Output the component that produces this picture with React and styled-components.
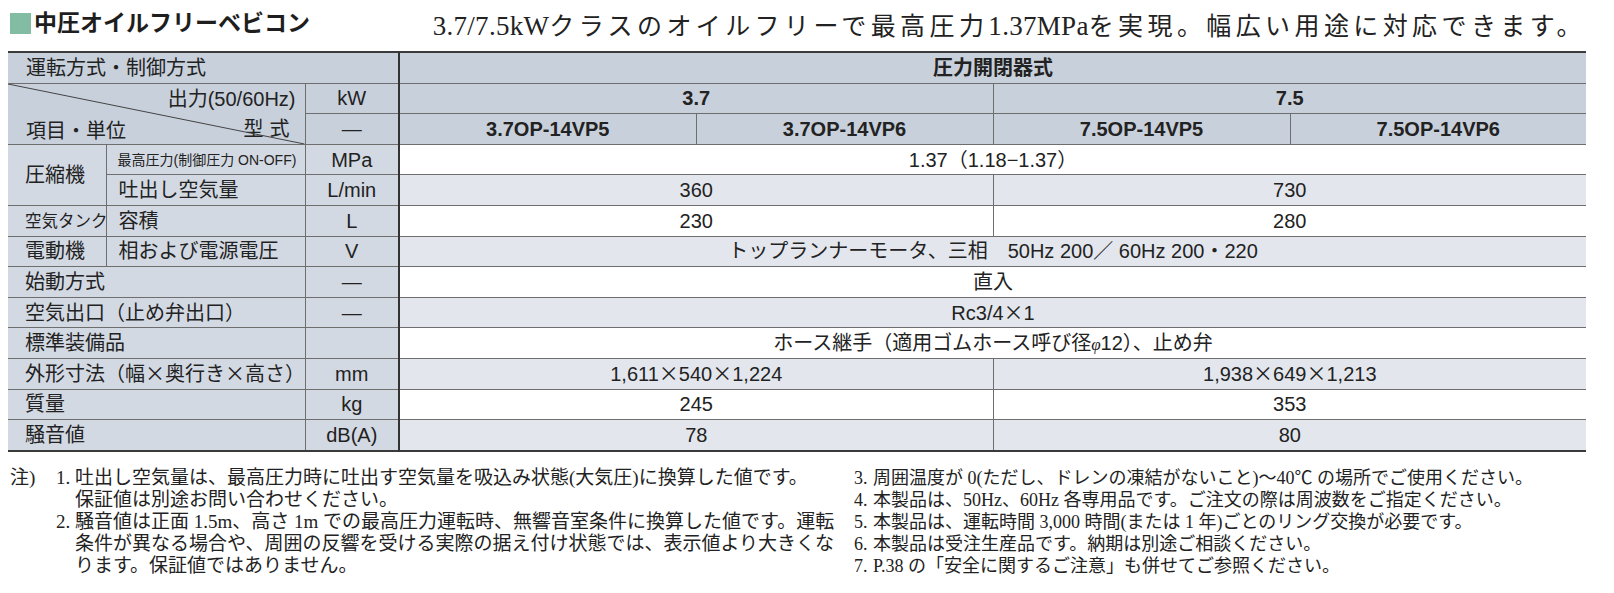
import React from "react";
import styled, { createGlobalStyle } from "styled-components";

const GlobalStyle = createGlobalStyle`
  html, body {
    margin: 0;
    padding: 0;
    background: #fff;
  }
  body {
    font-family: "Liberation Sans", "Noto Sans CJK JP", sans-serif;
    color: #222;
  }
`;

const tone = {
  head: "#c8d0db",
  label: "#d3d9e2",
  white: "#ffffff",
  gray: "#e3e7ed",
};

const Page = styled.div`
  width: 1614px;
  box-sizing: border-box;
  padding: 8px 28px 0 8px;
`;

const TopBar = styled.div`
  height: 43px;
  display: flex;
  align-items: flex-start;
  justify-content: space-between;
`;

const Title = styled.h1`
  margin: 4px 0 0 2px;
  display: flex;
  align-items: center;
  gap: 3px;
  font-size: 23px;
  font-weight: 700;
  line-height: 1;
  color: #1e1e1e;
`;

const Mark = styled.span`
  width: 21px;
  height: 21px;
  background: #82bca3;
`;

const Lead = styled.p`
  margin: 2px 0 0;
  font-family: "Liberation Serif", "Noto Sans CJK JP", serif;
  font-size: 25px;
  letter-spacing: 4.4px;
  line-height: 1.2;
  color: #222;
`;

const Latin = styled.span`
  font-size: 27px;
  letter-spacing: 0.3px;
`;

const Spec = styled.table`
  width: 1578px;
  table-layout: fixed;
  border-collapse: collapse;
  border-top: 2px solid #3a3a3a;
  border-bottom: 2px solid #3a3a3a;
`;

const Cell = styled.td`
  height: 29.6px;
  padding: 0 0 0 ${(p) => p.$pad || 0}px;
  background: ${(p) => tone[p.$tone || "white"]};
  text-align: ${(p) => (p.$pad ? "left" : "center")};
  font-weight: ${(p) => (p.$bold ? 700 : 400)};
  font-size: ${(p) => p.$size || 20}px;
  letter-spacing: ${(p) => p.$track || 0}px;
  border-bottom: 1px solid #6e6e6e;
  border-left: ${(p) =>
    p.$edge === "thick"
      ? "2px solid #333"
      : p.$edge === "thin"
      ? "1px solid #6e6e6e"
      : "none"};
  white-space: nowrap;
  line-height: 1;
  vertical-align: middle;
`;

const DiagCell = styled.td`
  padding: 0;
  background: ${tone.head};
  border-bottom: 1px solid #6e6e6e;
  vertical-align: top;
`;

const DiagBox = styled.div`
  position: relative;
  height: 60px;
  display: grid;
  grid-template-columns: 1fr auto;
  grid-template-rows: 30px 30px;
  align-items: center;
  font-size: 20px;
  line-height: 1;
`;

const DiagText = styled.span`
  justify-self: ${(p) => (p.$end ? "end" : "start")};
  padding: ${(p) => (p.$end ? "0 9px 0 0" : "4px 0 0 18px")};
  letter-spacing: ${(p) => p.$track || 0}px;
  white-space: nowrap;
`;

const DiagLine = styled.svg`
  position: absolute;
  inset: 0;
  width: 100%;
  height: 100%;
  pointer-events: none;
`;

const Times = styled.span`
  font-family: "Noto Sans CJK JP", sans-serif;
`;

const Phi = styled.i`
  font-family: "Liberation Serif", serif;
  font-size: 17px;
`;

const Notes = styled.div`
  display: flex;
  margin-top: 15px;
  font-family: "Liberation Serif", "Noto Sans CJK JP", serif;
  line-height: 22px;
  color: #222;
`;

const NoteHead = styled.div`
  width: 48px;
  flex: none;
  padding-left: 2px;
  box-sizing: border-box;
  font-size: 19px;
`;

const NoteList = styled.div`
  width: ${(p) => p.$w}px;
  flex: none;
  font-size: ${(p) => p.$size}px;
`;

const Note = styled.div`
  display: flex;
  white-space: nowrap;
`;

const NoteNum = styled.span`
  width: 19px;
  flex: none;
`;

const x = <Times>×</Times>;

const labelRows = [
  { key: "start", text: "始動方式", unit: "—", tone: "white", value: "直入" },
  { key: "out", text: "空気出口（止め弁出口）", unit: "—", tone: "gray", value: <>Rc3/4{x}1</> },
  {
    key: "std",
    text: "標準装備品",
    unit: "",
    tone: "white",
    value: (
      <>
        ホース継手（適用ゴムホース呼び径<Phi>φ</Phi>12）、止め弁
      </>
    ),
  },
];

const pairRows = [
  {
    key: "size",
    text: <>外形寸法（幅{x}奥行き{x}高さ）</>,
    unit: "mm",
    tone: "gray",
    a: <>1,611{x}540{x}1,224</>,
    b: <>1,938{x}649{x}1,213</>,
  },
  { key: "mass", text: "質量", unit: "kg", tone: "white", a: "245", b: "353" },
  { key: "noise", text: "騒音値", unit: "dB(A)", tone: "gray", a: "78", b: "80" },
];

const models = ["3.7OP-14VP5", "3.7OP-14VP6", "7.5OP-14VP5", "7.5OP-14VP6"];

export default function App() {
  return (
    <Page>
      <GlobalStyle />
      <TopBar>
        <Title>
          <Mark />
          中圧オイルフリーベビコン
        </Title>
        <Lead>
          <Latin>3.7/7.5kW</Latin>クラスのオイルフリーで最高圧力<Latin>1.37MPa</Latin>
          を実現。幅広い用途に対応できます。
        </Lead>
      </TopBar>

      <Spec>
        <colgroup>
          <col style={{ width: 98 }} />
          <col style={{ width: 199 }} />
          <col style={{ width: 94 }} />
          <col style={{ width: 297 }} />
          <col style={{ width: 297 }} />
          <col style={{ width: 297 }} />
          <col style={{ width: 296 }} />
        </colgroup>
        <tbody>
          <tr>
            <Cell colSpan={3} $tone="head" $pad={18}>
              運転方式・制御方式
            </Cell>
            <Cell colSpan={4} $tone="head" $edge="thick" $bold>
              圧力開閉器式
            </Cell>
          </tr>
          <tr>
            <DiagCell colSpan={2} rowSpan={2}>
              <DiagBox>
                <DiagLine viewBox="0 0 100 100" preserveAspectRatio="none">
                  <line x1="0" y1="0" x2="100" y2="100" stroke="#444" strokeWidth="1" vectorEffect="non-scaling-stroke" />
                </DiagLine>
                <span />
                <DiagText $end>出力(50/60Hz)</DiagText>
                <DiagText>項目・単位</DiagText>
                <DiagText $end $track={6}>型式</DiagText>
              </DiagBox>
            </DiagCell>
            <Cell $tone="head" $edge="thin">kW</Cell>
            <Cell colSpan={2} $tone="head" $edge="thick" $bold>3.7</Cell>
            <Cell colSpan={2} $tone="head" $edge="thin" $bold>7.5</Cell>
          </tr>
          <tr>
            <Cell $tone="head" $edge="thin">—</Cell>
            {models.map((m, i) => (
              <Cell key={m} $tone="head" $edge={i === 0 ? "thick" : "thin"} $bold>
                {m}
              </Cell>
            ))}
          </tr>

          <tr>
            <Cell rowSpan={2} $tone="label" $pad={17}>圧縮機</Cell>
            <Cell $tone="label" $edge="thin" $pad={11} $size={14}>
              最高圧力(制御圧力 ON-OFF)
            </Cell>
            <Cell $tone="label" $edge="thin">MPa</Cell>
            <Cell colSpan={4} $edge="thick">1.37（1.18−1.37）</Cell>
          </tr>
          <tr>
            <Cell $tone="label" $edge="thin" $pad={12}>吐出し空気量</Cell>
            <Cell $tone="label" $edge="thin">L/min</Cell>
            <Cell colSpan={2} $tone="gray" $edge="thick">360</Cell>
            <Cell colSpan={2} $tone="gray" $edge="thin">730</Cell>
          </tr>
          <tr>
            <Cell $tone="label" $pad={17} $size={16.5}>空気タンク</Cell>
            <Cell $tone="label" $edge="thin" $pad={12}>容積</Cell>
            <Cell $tone="label" $edge="thin">L</Cell>
            <Cell colSpan={2} $edge="thick">230</Cell>
            <Cell colSpan={2} $edge="thin">280</Cell>
          </tr>
          <tr>
            <Cell $tone="label" $pad={17}>電動機</Cell>
            <Cell $tone="label" $edge="thin" $pad={12}>相および電源電圧</Cell>
            <Cell $tone="label" $edge="thin">V</Cell>
            <Cell colSpan={4} $tone="gray" $edge="thick">
              トップランナーモータ、三相　50Hz 200／ 60Hz 200・220
            </Cell>
          </tr>
          {labelRows.map((r) => (
            <tr key={r.key}>
              <Cell colSpan={2} $tone="label" $pad={17}>{r.text}</Cell>
              <Cell $tone="label" $edge="thin">{r.unit}</Cell>
              <Cell colSpan={4} $tone={r.tone} $edge="thick">{r.value}</Cell>
            </tr>
          ))}
          {pairRows.map((r) => (
            <tr key={r.key}>
              <Cell colSpan={2} $tone="label" $pad={17}>{r.text}</Cell>
              <Cell $tone="label" $edge="thin">{r.unit}</Cell>
              <Cell colSpan={2} $tone={r.tone} $edge="thick">{r.a}</Cell>
              <Cell colSpan={2} $tone={r.tone} $edge="thin">{r.b}</Cell>
            </tr>
          ))}
        </tbody>
      </Spec>

      <Notes>
        <NoteHead>注)</NoteHead>
        <NoteList $w={798} $size={19}>
          <Note>
            <NoteNum>1.</NoteNum>
            <span>
              吐出し空気量は、最高圧力時に吐出す空気量を吸込み状態(大気圧)に換算した値です。
              <br />
              保証値は別途お問い合わせください。
            </span>
          </Note>
          <Note>
            <NoteNum>2.</NoteNum>
            <span>
              騒音値は正面 1.5m、高さ 1m での最高圧力運転時、無響音室条件に換算した値です。運転
              <br />
              条件が異なる場合や、周囲の反響を受ける実際の据え付け状態では、表示値より大きくな
              <br />
              ります。保証値ではありません。
            </span>
          </Note>
        </NoteList>
        <NoteList $w={720} $size={18}>
          <Note>
            <NoteNum>3.</NoteNum>
            <span>周囲温度が 0(ただし、ドレンの凍結がないこと)～40℃ の場所でご使用ください。</span>
          </Note>
          <Note>
            <NoteNum>4.</NoteNum>
            <span>本製品は、50Hz、60Hz 各専用品です。ご注文の際は周波数をご指定ください。</span>
          </Note>
          <Note>
            <NoteNum>5.</NoteNum>
            <span>本製品は、運転時間 3,000 時間(または 1 年)ごとのリング交換が必要です。</span>
          </Note>
          <Note>
            <NoteNum>6.</NoteNum>
            <span>本製品は受注生産品です。納期は別途ご相談ください。</span>
          </Note>
          <Note>
            <NoteNum>7.</NoteNum>
            <span>P.38 の「安全に関するご注意」も併せてご参照ください。</span>
          </Note>
        </NoteList>
      </Notes>
    </Page>
  );
}
